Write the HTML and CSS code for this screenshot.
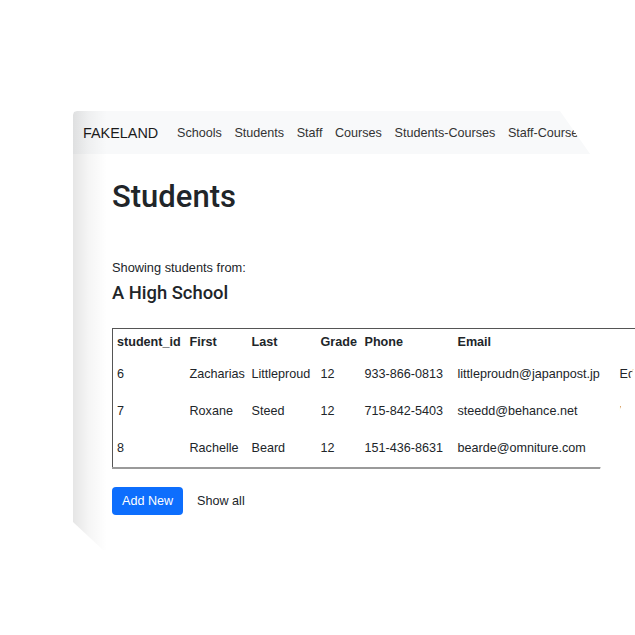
FILE: index.html
```html
<!DOCTYPE html>
<html lang="en">
<head>
<meta charset="utf-8">
<title>Students</title>
<link rel="stylesheet" href="styles.css">
</head>
<body>
<div class="stage">
  <div class="card">
    <nav class="navbar">
      <span class="brand">FAKELAND</span>
      <a class="nav-link">Schools</a>
      <a class="nav-link">Students</a>
      <a class="nav-link">Staff</a>
      <a class="nav-link">Courses</a>
      <a class="nav-link">Students-Courses</a>
      <a class="nav-link">Staff-Courses</a>
    </nav>
    <main class="container">
      <h1 class="title">Students</h1>
      <p class="lead-in">Showing students from:</p>
      <h4 class="school">A High School</h4>
      <table class="data">
        <colgroup>
          <col class="c1"><col class="c2"><col class="c3"><col class="c4"><col class="c5"><col class="c6"><col class="c7">
        </colgroup>
        <thead>
          <tr><th>student_id</th><th>First</th><th>Last</th><th>Grade</th><th>Phone</th><th>Email</th><th></th></tr>
        </thead>
        <tbody>
          <tr><td>6</td><td>Zacharias</td><td>Littleproud</td><td>12</td><td>933-866-0813</td><td>littleproudn@japanpost.jp</td><td>Edit</td></tr>
          <tr><td>7</td><td>Roxane</td><td>Steed</td><td>12</td><td>715-842-5403</td><td>steedd@behance.net</td><td>Edit</td></tr>
          <tr><td>8</td><td>Rachelle</td><td>Beard</td><td>12</td><td>151-436-8631</td><td>bearde@omniture.com</td><td>Edit</td></tr>
        </tbody>
      </table>
      <div class="actions">
        <a class="btn btn-primary">Add New</a>
        <a class="btn btn-link">Show all</a>
      </div>
    </main>
  </div>
</div>
</body>
</html>
```
FILE: styles.css
```css
html, body {
  margin: 0;
  padding: 0;
  background: #ffffff;
  overflow: hidden;
}
body {
  font-family: "Liberation Sans", Arial, sans-serif;
  font-size: 12.6px;
  color: #212529;
}
.stage {
  padding: 111px 0 0 73px;
  height: 524px;
}
.card {
  position: relative;
  width: 562px;
  height: 439px;
  overflow: hidden;
  background: #ffffff;
  clip-path: polygon(0 4px, 1px 1px, 4px 0, 487px 0, 595px 154px, 500px 439px, 30px 439px, 0 411px);
}
.card::before {
  content: "";
  position: absolute;
  left: 0;
  top: 0;
  bottom: 0;
  width: 34px;
  background: linear-gradient(to right, rgba(0,0,0,0.1), rgba(0,0,0,0.04) 45%, rgba(0,0,0,0));
  pointer-events: none;
  z-index: 2;
}
.navbar {
  display: flex;
  align-items: center;
  height: 43px;
  padding-left: 10px;
  background: #f8f9fa;
  white-space: nowrap;
}
.brand {
  font-size: 14.4px;
  color: #1b1b1b;
  margin-right: 12.5px;
}
.nav-link {
  color: #333;
  padding: 0 6.3px;
  font-size: 12.6px;
}
.container {
  padding: 0 0 0 39px;
}
.title {
  margin: 24px 0 0;
  font-family: Roboto, "Liberation Sans", sans-serif;
  font-size: 31px;
  font-weight: 500;
  line-height: 37px;
  color: #212529;
}
.lead-in {
  margin: 43px 0 0;
  line-height: 19px;
  font-size: 12.8px;
}
.school {
  margin: 5px 0 0;
  font-family: Roboto, "Liberation Sans", sans-serif;
  font-size: 18.4px;
  font-weight: 500;
  line-height: 22px;
}
.data {
  margin-top: 24px;
  table-layout: fixed;
  width: 563px;
  border-collapse: collapse;
  border-style: solid;
  border-width: 1px 1px 2px 1px;
  border-color: #555 #555 #9a9a9a #555;
  white-space: nowrap;
}
.c1 { width: 73px; }
.c2 { width: 62px; }
.c3 { width: 69px; }
.c4 { width: 44px; }
.c5 { width: 93px; }
.c6 { width: 162px; }
.c7 { width: 60px; }
.data th {
  text-align: left;
  font-weight: 700;
  padding: 6px 4px;
  line-height: 15px;
}
.data td {
  padding: 11px 4px;
  line-height: 15px;
}
.actions {
  display: flex;
  align-items: center;
  margin-top: 18px;
}
.btn {
  display: inline-block;
  font-size: 12.6px;
  line-height: 16px;
  padding: 6px 10px;
  border-radius: 4px;
  text-decoration: none;
}
.btn-primary {
  background: #0d6efd;
  color: #ffffff;
}
.btn-link {
  color: #212529;
  margin-left: 4px;
}
```
